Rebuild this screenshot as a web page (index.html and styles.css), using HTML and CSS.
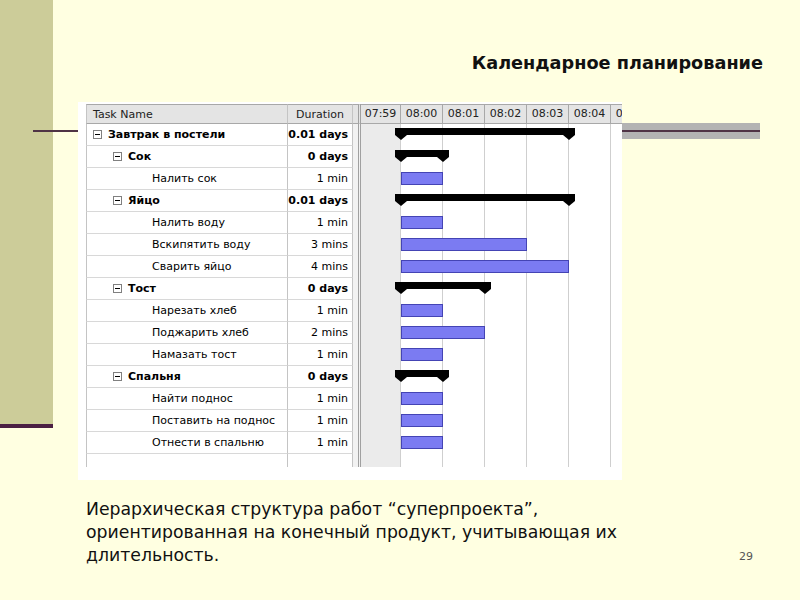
FILE: index.html
```html
<!DOCTYPE html>
<html lang="ru">
<head>
  <meta charset="UTF-8" />
  <meta name="viewport" content="width=device-width, initial-scale=1.0"/>
  <title>Календарное планирование</title>
  <link rel="stylesheet" href="styles.css">
</head>
<body>
  <div class="slide">
    <div class="band"></div>
    <div class="rule-shade"></div>
    <div class="rule"></div>

    <div class="main">
      <h1 class="title">Календарное планирование</h1>

      <div class="gantt">
        <div class="row head">
          <div class="name">Task Name</div>
          <div class="dur">Duration</div>
          <div class="split"></div>
          <div class="time">
            <span class="tick first">07:59</span>
            <span class="tick">08:00</span>
            <span class="tick">08:01</span>
            <span class="tick">08:02</span>
            <span class="tick">08:03</span>
            <span class="tick">08:04</span>
            <span class="tick">08:05</span>
          </div>
        </div>

        <div class="row sum l1">
          <div class="name"><i class="toggle"></i>Завтрак в постели</div>
          <div class="dur">0.01 days</div>
          <div class="split"></div>
          <div class="time"><div class="sbar" style="width:180px"></div></div>
        </div>
        <div class="row sum l2">
          <div class="name"><i class="toggle"></i>Сок</div>
          <div class="dur">0 days</div>
          <div class="split"></div>
          <div class="time"><div class="sbar" style="width:54px"></div></div>
        </div>
        <div class="row l3">
          <div class="name">Налить сок</div>
          <div class="dur">1 min</div>
          <div class="split"></div>
          <div class="time"><div class="bar" style="width:42px"></div></div>
        </div>
        <div class="row sum l2">
          <div class="name"><i class="toggle"></i>Яйцо</div>
          <div class="dur">0.01 days</div>
          <div class="split"></div>
          <div class="time"><div class="sbar" style="width:180px"></div></div>
        </div>
        <div class="row l3">
          <div class="name">Налить воду</div>
          <div class="dur">1 min</div>
          <div class="split"></div>
          <div class="time"><div class="bar" style="width:42px"></div></div>
        </div>
        <div class="row l3">
          <div class="name">Вскипятить воду</div>
          <div class="dur">3 mins</div>
          <div class="split"></div>
          <div class="time"><div class="bar" style="width:126px"></div></div>
        </div>
        <div class="row l3">
          <div class="name">Сварить яйцо</div>
          <div class="dur">4 mins</div>
          <div class="split"></div>
          <div class="time"><div class="bar" style="width:168px"></div></div>
        </div>
        <div class="row sum l2">
          <div class="name"><i class="toggle"></i>Тост</div>
          <div class="dur">0 days</div>
          <div class="split"></div>
          <div class="time"><div class="sbar" style="width:96px"></div></div>
        </div>
        <div class="row l3">
          <div class="name">Нарезать хлеб</div>
          <div class="dur">1 min</div>
          <div class="split"></div>
          <div class="time"><div class="bar" style="width:42px"></div></div>
        </div>
        <div class="row l3">
          <div class="name">Поджарить хлеб</div>
          <div class="dur">2 mins</div>
          <div class="split"></div>
          <div class="time"><div class="bar" style="width:84px"></div></div>
        </div>
        <div class="row l3">
          <div class="name">Намазать тост</div>
          <div class="dur">1 min</div>
          <div class="split"></div>
          <div class="time"><div class="bar" style="width:42px"></div></div>
        </div>
        <div class="row sum l2">
          <div class="name"><i class="toggle"></i>Спальня</div>
          <div class="dur">0 days</div>
          <div class="split"></div>
          <div class="time"><div class="sbar" style="width:54px"></div></div>
        </div>
        <div class="row l3">
          <div class="name">Найти поднос</div>
          <div class="dur">1 min</div>
          <div class="split"></div>
          <div class="time"><div class="bar" style="width:42px"></div></div>
        </div>
        <div class="row l3">
          <div class="name">Поставить на поднос</div>
          <div class="dur">1 min</div>
          <div class="split"></div>
          <div class="time"><div class="bar" style="width:42px"></div></div>
        </div>
        <div class="row l3">
          <div class="name">Отнести в спальню</div>
          <div class="dur">1 min</div>
          <div class="split"></div>
          <div class="time"><div class="bar" style="width:42px"></div></div>
        </div>
        <div class="row empty">
          <div class="name"></div>
          <div class="dur"></div>
          <div class="split"></div>
          <div class="time"></div>
        </div>
      </div>

      <div class="caption">
        <p class="text">Иерархическая структура работ “суперпроекта”,<br>ориентированная на конечный продукт, учитывающая их<br>длительность.</p>
        <span class="num">29</span>
      </div>
    </div>
  </div>
</body>
</html>
```

FILE: styles.css
```css
body {
  margin: 0;
  background: #ffffe1;
  font-family: "DejaVu Sans", Tahoma, sans-serif;
  color: #000;
}
.slide {
  position: relative;
  width: 800px;
  height: 600px;
  display: grid;
  grid-template-columns: 53px 1fr;
  align-items: start;
}
.band {
  height: 424px;
  background: #cccc99;
  border-bottom: 4px solid #4b1f43;
}
.rule-shade {
  position: absolute;
  left: 622px;
  top: 123px;
  width: 138px;
  height: 16px;
  background: #b3b3b3;
}
.rule {
  position: absolute;
  left: 33px;
  top: 130px;
  width: 727px;
  height: 2px;
  background: #4f3345;
}
.main {
  display: flex;
  flex-direction: column;
}
.title {
  margin: 52px 37px 0 0;
  font-size: 17.7px;
  line-height: 22px;
  font-weight: bold;
  text-align: right;
  color: #111;
}

/* gantt picture */
.gantt {
  position: relative;
  z-index: 1;
  margin: 28px 0 0 25px;
  width: 544px;
  height: 378px;
  box-sizing: border-box;
  padding: 2px 0 0 8px;
  background: #fff;
  overflow: hidden;
  font-size: 11px;
}
.row {
  display: flex;
  height: 22px;
}
.name {
  flex: none;
  width: 202px;
  box-sizing: border-box;
  display: flex;
  align-items: center;
  padding-left: 6px;
  border-left: 1px solid #c4c4c4;
  border-right: 1px solid #c4c4c4;
  border-bottom: 1px solid #d8d8d8;
  white-space: nowrap;
}
.dur {
  flex: none;
  width: 65px;
  box-sizing: border-box;
  display: flex;
  align-items: center;
  justify-content: flex-end;
  padding-right: 4px;
  border-right: 1px solid #c4c4c4;
  border-bottom: 1px solid #d8d8d8;
}
.split {
  flex: none;
  width: 8px;
  box-sizing: border-box;
  background: #f2f2f2;
  border-right: 3px double #a0a0a0;
}
.time {
  flex: 1;
  display: flex;
  align-items: flex-start;
  padding-top: 4px;
  box-sizing: border-box;
  overflow: hidden;
  background:
    linear-gradient(90deg, #ebebeb 0 39px, transparent 39px),
    repeating-linear-gradient(90deg, transparent 0 39px, #cfcfcf 39px 40px, transparent 40px 42px),
    #fff;
}
.sum .name,
.sum .dur {
  font-weight: bold;
}
.l2 .name {
  padding-left: 26px;
}
.l3 .name {
  padding-left: 65px;
}
.toggle {
  width: 9px;
  height: 9px;
  margin-right: 6px;
  box-sizing: border-box;
  border: 1px solid #808080;
  background: linear-gradient(#000, #000) center / 5px 1px no-repeat, #fff;
}

.head {
  height: 20px;
}
.head .name,
.head .dur,
.head .split,
.head .time {
  background: #e4e4e4;
  border-top: 1px solid #a8a8a8;
  border-bottom: 1px solid #a8a8a8;
  color: #222;
}
.head .dur {
  justify-content: center;
  padding-right: 0;
}
.head .time {
  padding-top: 0;
  align-items: stretch;
}
.tick {
  flex: none;
  width: 42px;
  box-sizing: border-box;
  border-right: 1px solid #a8a8a8;
  text-align: center;
  line-height: 18px;
}
.tick.first {
  width: 40px;
}

.bar {
  flex: none;
  margin-left: 40px;
  height: 13px;
  box-sizing: border-box;
  background: #7b7bf2;
  border: 1px solid #4444b4;
}
.sbar {
  flex: none;
  position: relative;
  margin-left: 34px;
  height: 7px;
  background: #000;
}
.sbar::before,
.sbar::after {
  content: "";
  position: absolute;
  top: 7px;
  border-left: 6px solid transparent;
  border-right: 6px solid transparent;
  border-top: 5px solid #000;
}
.sbar::before {
  left: 0;
}
.sbar::after {
  right: 0;
}
.empty {
  height: 13px;
}
.empty .name,
.empty .dur {
  border-bottom: none;
}

.caption {
  display: flex;
  align-items: flex-end;
  margin: 18px 0 0 33px;
}
.text {
  margin: 0;
  font-size: 17.3px;
  line-height: 23px;
  color: #111;
}
.num {
  margin: 0 47px 4px auto;
  font-size: 11px;
  color: #555;
}
```
